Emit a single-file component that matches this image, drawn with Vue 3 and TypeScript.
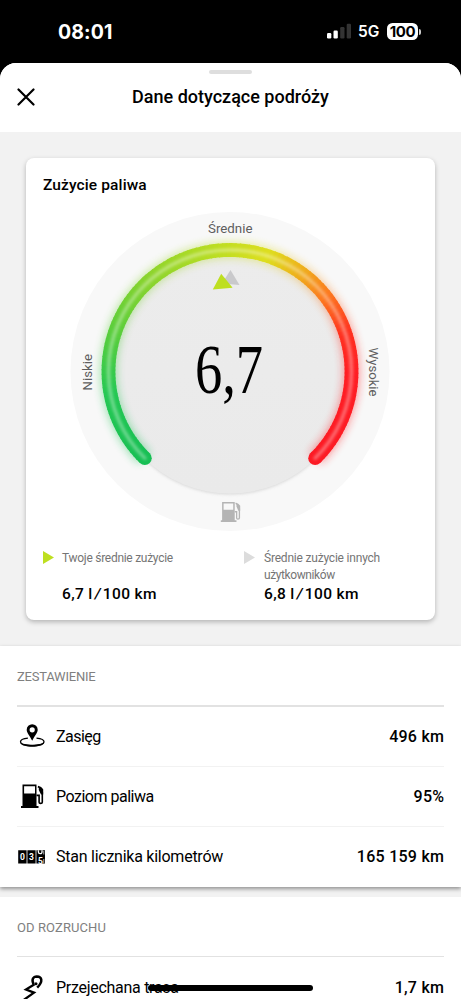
<script setup lang="ts">
interface Row {
  icon: 'range' | 'fuel' | 'odometer'
  label: string
  value: string
  size: string
}

const rows: Row[] = [
  { icon: 'range', label: 'Zasięg', value: '496 km', size: 'w-range' },
  { icon: 'fuel', label: 'Poziom paliwa', value: '95%', size: 'w-fuel' },
  { icon: 'odometer', label: 'Stan licznika kilometrów', value: '165 159 km', size: 'w-odo' },
]

// Colour stops of the gauge: angle in degrees (clockwise from the top) and RGB.
const stops: [number, number[]][] = [
  [-138, [22, 190, 84]],
  [-100, [38, 200, 84]],
  [-75, [84, 205, 62]],
  [-40, [140, 212, 45]],
  [-5, [190, 222, 34]],
  [18, [222, 222, 30]],
  [35, [238, 176, 28]],
  [52, [252, 120, 32]],
  [72, [255, 48, 32]],
  [90, [255, 30, 36]],
  [138, [252, 26, 36]],
]

const CX = 230
const CY = 371.5
const R = 121.5

function colourAt(a: number): string {
  for (let i = 1; i < stops.length; i++) {
    const [a0, c0] = stops[i - 1]
    const [a1, c1] = stops[i]
    if (a <= a1) {
      const t = Math.max(0, (a - a0) / (a1 - a0))
      return `rgb(${c0.map((v, k) => Math.round(v + (c1[k] - v) * t)).join(',')})`
    }
  }
  return 'rgb(252,26,36)'
}

function point(a: number): string {
  const rad = (a * Math.PI) / 180
  return `${(CX + R * Math.sin(rad)).toFixed(2)} ${(CY - R * Math.cos(rad)).toFixed(2)}`
}

const START = -135.5
const STEP = 2
const COUNT = 136
const segments = Array.from({ length: COUNT }, (_, i) => {
  const a = START + i * STEP
  const end = Math.min(a + STEP + (i < COUNT - 1 ? 0.5 : 0), 135.5)
  return { d: `M${point(a)}A${R} ${R} 0 0 1 ${point(end)}`, colour: colourAt(a + 1) }
})
const caps = [START, 135.5].map((a) => {
  const [x, y] = point(a).split(' ')
  return { x, y, colour: colourAt(a) }
})
const fullArc = `M${point(START)}A${R} ${R} 0 1 1 ${point(135.5)}`
</script>

<template>
  <div class="screen">
    <header class="status">
      <span class="clock">08:01</span>
      <div class="status-right">
        <svg class="signal" width="24" height="16" viewBox="0 0 24 16">
          <rect x="0" y="10" width="4.3" height="5.5" rx="1.2" fill="#fff" />
          <rect x="6.5" y="7.5" width="4.3" height="8" rx="1.2" fill="#fff" />
          <rect x="13.2" y="4" width="4.3" height="11.5" rx="1.2" fill="#333" />
          <rect x="19.7" y="0.7" width="4.3" height="14.8" rx="1.2" fill="#333" />
        </svg>
        <span class="net">5G</span>
        <span class="battery">100</span>
        <span class="nub"></span>
      </div>
    </header>

    <main class="sheet">
      <div class="title-bar">
        <span class="grabber"></span>
        <div class="title-row">
          <svg class="close" width="18" height="18" viewBox="0 0 18 18">
            <path d="M1.5 1.5 16.5 16.5M16.5 1.5 1.5 16.5" fill="none" stroke="#000" stroke-width="2.2" stroke-linecap="round" />
          </svg>
          <h1>Dane dotyczące podróży</h1>
        </div>
      </div>

      <section class="card-area">
        <div class="card">
          <h2>Zużycie paliwa</h2>
          <svg class="gauge" width="331" height="330" viewBox="65 207 331 330">
            <defs>
              <filter id="glow" x="-20%" y="-20%" width="140%" height="140%"><feGaussianBlur stdDeviation="4" /></filter>
              <filter id="soft" x="-20%" y="-20%" width="140%" height="140%"><feGaussianBlur stdDeviation="1.7" /></filter>
              <linearGradient id="dial" x1="0" y1="0" x2="0" y2="1">
                <stop offset="0" stop-color="#ececec" />
                <stop offset="1" stop-color="#eaeaea" />
              </linearGradient>
            </defs>
            <circle :cx="CX" :cy="CY" r="159.5" fill="#f8f8f8" />
            <circle :cx="CX" :cy="CY + 1" r="122" fill="#c5c5c5" filter="url(#soft)" opacity=".6" />
            <circle :cx="CX" :cy="CY" r="122" fill="url(#dial)" />
            <g filter="url(#glow)" opacity=".45">
              <path v-for="(s, i) in segments" :key="i" :d="s.d" :stroke="s.colour" stroke-width="16" fill="none" />
            </g>
            <circle v-for="(c, i) in caps" :key="i" :cx="c.x" :cy="c.y" r="6.9" :fill="c.colour" />
            <path v-for="(s, i) in segments" :key="i" :d="s.d" :stroke="s.colour" stroke-width="13.8" fill="none" />
            <path :d="fullArc" stroke="#fff" stroke-width="3.4" stroke-linecap="round" fill="none" opacity=".36" filter="url(#soft)" />
            <path d="M230.5 270 222 283.5 239.5 285Z" fill="#c9c9cb" />
            <path d="M221.2 273.7 212.8 289.6 232.6 287.7Z" fill="#bedf20" />
            <g class="gauge-label">
              <text x="208" y="233.2" textLength="44.5" lengthAdjust="spacingAndGlyphs">Średnie</text>
              <text transform="translate(92.2 390.5) rotate(-90)" textLength="36.5" lengthAdjust="spacingAndGlyphs">Niskie</text>
              <text transform="translate(368.5 347.5) rotate(90)" textLength="49" lengthAdjust="spacingAndGlyphs">Wysokie</text>
            </g>
            <text class="reading" transform="translate(195 392.8) scale(.79 1)">6,7</text>
            <g fill="#b4b4b4" transform="translate(220.8 501.5) scale(.87)">
              <path fill-rule="evenodd" d="M1.5 .5H16V21.5H18V23.5H0V21.5H1.5ZM3.2 2.2V9.5H14.3V2.2Z" />
              <path d="M16 11.8H18.2V19Q18.2 20.3 19.7 20.3Q21.4 20.3 21.4 19V8" fill="none" stroke="#b4b4b4" stroke-width="1.5" />
              <path d="M17.2 1.2Q20.6 2 22.3 5V10.5H20.1L18 5.8V3.9Q17.6 3.2 16.8 3Z" />
            </g>
          </svg>
          <div class="legend">
            <div class="legend-item mine">
              <span class="marker"></span>
              <div class="legend-text">
                <p><span class="l1">Twoje średnie zużycie</span></p>
                <strong>6,7 l<i>/</i>100 km</strong>
              </div>
            </div>
            <div class="legend-item others">
              <span class="marker"></span>
              <div class="legend-text">
                <p><span class="l2">Średnie zużycie innych</span><br /><span class="l3">użytkowników</span></p>
                <strong>6,8 l<i>/</i>100 km</strong>
              </div>
            </div>
          </div>
        </div>
      </section>

      <section class="group summary">
        <h3 class="s1">ZESTAWIENIE</h3>
        <ul>
          <li v-for="row in rows" :key="row.icon">
            <svg class="icon" width="28" height="28" viewBox="0 0 28 28">
              <template v-if="row.icon === 'range'">
                <path fill-rule="evenodd" d="M15.2 1.2A5.5 5.5 0 0 1 20.7 6.7C20.7 9.8 17.7 12.6 15.2 17.8C12.7 12.6 9.7 9.8 9.7 6.7A5.5 5.5 0 0 1 15.2 1.2ZM15.2 4.2A2.6 2.6 0 1 0 15.2 9.4A2.6 2.6 0 0 0 15.2 4.2Z" />
                <path d="M10.9 15.2C6.2 15.7 3.5 17 3.5 18.8C3.5 21.2 8.3 22.7 15.2 22.7S27 21.2 27 18.8C27 17 24.2 15.7 19.5 15.2" fill="none" stroke="#000" stroke-width="1.3" />
                <path d="M3 19C4 25.4 26.4 25.4 27.4 19C24 22.6 6.5 22.6 3 19Z" />
              </template>
              <g v-else-if="row.icon === 'fuel'" transform="translate(4 1.6)">
                <path fill-rule="evenodd" d="M1.5 0H15.5V21.3H17.5V23.3H0V21.3H1.5ZM3.1 1.6V8.8H14V1.6Z" />
                <path d="M15.5 10.8H18.1V17.6Q18.1 18.8 19.6 18.8Q21.3 18.8 21.3 17.6V7.5" fill="none" stroke="#000" stroke-width="1.6" />
                <path d="M17.2 1.1Q20.6 2 22.2 4.7V9.8H20L17.8 5.4V3.5Q17.4 3 16.6 2.8Z" />
              </g>
              <template v-else>
                <path d="M1.2 7.2H9.6V20.6H1.2ZM10.4 7.2H18.6V20.6H10.4ZM19.4 7.2H28.4V20.6H19.4Z" />
                <text class="digit" x="2.9" y="17.2">0</text>
                <text class="digit" x="12" y="17.2">3</text>
                <path d="M21.4 7.2V9Q21.4 10.6 23.2 10.6T25 9V7.2" fill="none" stroke="#fff" stroke-width="1.3" />
                <text class="digit" x="20.9" y="20.9">5</text>
                <path d="M26.8 8V11.5M26.8 16V20" stroke="#fff" stroke-width=".7" />
              </template>
            </svg>
            <span class="label" :class="row.size">{{ row.label }}</span>
            <span class="value">{{ row.value }}</span>
          </li>
        </ul>
      </section>

      <section class="group trip">
        <h3 class="s2">OD ROZRUCHU</h3>
        <ul>
          <li>
            <svg class="icon" width="28" height="28" viewBox="0 0 28 28">
              <path d="M5.5 26.8 17 18.6 9 15.6 17.6 10.2" fill="none" stroke="#000" stroke-width="2.3" />
              <path d="M16.6 10.2C14.2 5.6 16.2 2.4 19.8 2.4C25 2.6 26.4 7.4 20.2 13.6" fill="none" stroke="#000" stroke-width="2.5" />
              <circle cx="19" cy="9.8" r="1.5" />
            </svg>
            <span class="label w-trip">Przejechana trasa</span>
            <span class="value">1,7 km</span>
          </li>
        </ul>
      </section>
    </main>
    <span class="home"></span>
  </div>
</template>

<style>
body {
  background: #000;
  overflow: hidden;
}
</style>

<style scoped>
* {
  box-sizing: border-box;
}
.screen {
  position: relative;
  width: 461px;
  height: 999px;
  overflow: hidden;
  background: #000;
  font-family: Roboto, 'Liberation Sans', sans-serif;
  color: #000;
}
h1, h2, h3, p, ul {
  margin: 0;
  padding: 0;
}
.status {
  display: flex;
  justify-content: space-between;
  align-items: center;
  height: 63px;
  padding: 0 40px 0 58px;
  color: #fff;
  font-family: Inter, 'Liberation Sans', sans-serif;
}
.clock {
  font-size: 19.5px;
  font-weight: 700;
  line-height: 24px;
  letter-spacing: 0.1px;
}
.status-right {
  display: flex;
  align-items: center;
  height: 18px;
}
.signal {
  margin-top: -1px;
}
.net {
  margin-left: 7px;
  font-size: 15.5px;
  font-weight: 600;
  line-height: 18px;
  width: 22px;
}
.battery {
  margin-left: 7px;
  width: 31px;
  height: 17px;
  margin-top: -1px;
  border-radius: 5.5px;
  background: #fff;
  color: #000;
  font-size: 15px;
  font-weight: 700;
  line-height: 17px;
  letter-spacing: -0.4px;
  text-align: center;
}
.nub {
  width: 2px;
  height: 6px;
  margin-left: 1px;
  border-radius: 0 2px 2px 0;
  background: #ccc;
}
.sheet {
  height: 936px;
  overflow: hidden;
  border-radius: 16px 16px 0 0;
  background: #f2f2f2;
}
.title-bar {
  display: flex;
  flex-direction: column;
  align-items: center;
  height: 69px;
  padding-top: 7px;
  background: #fff;
}
.grabber {
  width: 43px;
  height: 4px;
  border-radius: 2px;
  background: #dedede;
}
.title-row {
  display: grid;
  grid-template-columns: 18px 1fr 18px;
  align-items: center;
  width: 100%;
  height: 24px;
  margin-top: 11px;
  padding: 0 17px;
}
h1 {
  font-size: 18px;
  font-weight: 500;
  line-height: 24px;
  text-align: center;
  white-space: nowrap;
}
.card-area {
  height: 514px;
  padding: 26px 26px 0;
}
.card {
  display: flex;
  flex-direction: column;
  align-items: center;
  height: 462px;
  border-radius: 8px;
  background: #fff;
  box-shadow: 0 2px 5px rgba(0, 0, 0, 0.26);
}
h2 {
  align-self: flex-start;
  margin: 17px 0 0 17px;
  font-size: 15.5px;
  font-weight: 500;
  line-height: 20px;
  letter-spacing: 0.12px;
  white-space: nowrap;
}
.gauge {
  flex: none;
  margin-top: 12px;
}
.gauge-label {
  font-size: 12.8px;
  fill: #5e5e5e;
}
.reading {
  font-family: 'Liberation Serif', serif;
  font-size: 69px;
}
.legend {
  display: grid;
  grid-template-columns: 201px 1fr;
  width: 100%;
  margin-top: 12px;
  padding-left: 17px;
}
.legend-item {
  display: grid;
  grid-template-columns: 20px 1fr;
}
.mine .legend-text {
  margin-left: -1px;
}
.marker {
  width: 11px;
  height: 13px;
  margin-top: 2px;
  background: #bedf20;
  clip-path: polygon(0 0, 100% 50%, 0 100%);
}
.others .marker {
  background: #dcdcdc;
}
.legend-text p {
  height: 36px;
  padding-top: 1px;
  color: #757575;
  font-size: 12px;
  line-height: 17px;
  white-space: nowrap;
}
.l1 {
  letter-spacing: -0.28px;
}
.l2 {
  letter-spacing: -0.2px;
}
.l3 {
  letter-spacing: -0.4px;
}
.legend-text strong {
  display: block;
  font-size: 15.5px;
  font-weight: 500;
  line-height: 18px;
  letter-spacing: 0.35px;
  white-space: nowrap;
}
.legend-text i {
  margin: 0 2px;
}
.group {
  padding: 0 17px;
  background: #fff;
}
.summary {
  height: 241px;
  box-shadow: 0 2px 4px rgba(0, 0, 0, 0.4);
}
.trip {
  height: 130px;
  margin-top: 10px;
}
h3 {
  height: 61px;
  padding-top: 21px;
  border-bottom: 2px solid #e2e2e2;
  color: #808080;
  font-size: 13px;
  font-weight: 400;
  line-height: 20px;
}
.s1 {
  letter-spacing: -0.22px;
}
.s2 {
  height: 60px;
  letter-spacing: 0.1px;
  border-bottom-width: 1px;
}
.trip li {
  margin-top: 1px;
}
ul {
  list-style: none;
}
li {
  display: flex;
  align-items: center;
  height: 60px;
  border-bottom: 1px solid #f2f2f2;
}
.summary li:last-child {
  border-bottom: 0;
}
.icon {
  flex: none;
  margin-right: 11px;
}
.label,
.value {
  font-size: 16px;
  line-height: 22px;
  white-space: nowrap;
}
.w-range {
  letter-spacing: -0.55px;
}
.w-fuel {
  letter-spacing: -0.5px;
}
.w-odo {
  letter-spacing: -0.25px;
}
.w-trip {
  letter-spacing: -0.28px;
}
.value {
  margin-left: auto;
  margin-right: -0.3px;
  font-weight: 500;
  letter-spacing: 0.27px;
}
.digit {
  fill: #fff;
  font: 700 8.5px Roboto, sans-serif;
}
.home {
  position: absolute;
  left: 148px;
  top: 985px;
  width: 165px;
  height: 5.5px;
  border-radius: 3px;
  background: #000;
}
</style>
